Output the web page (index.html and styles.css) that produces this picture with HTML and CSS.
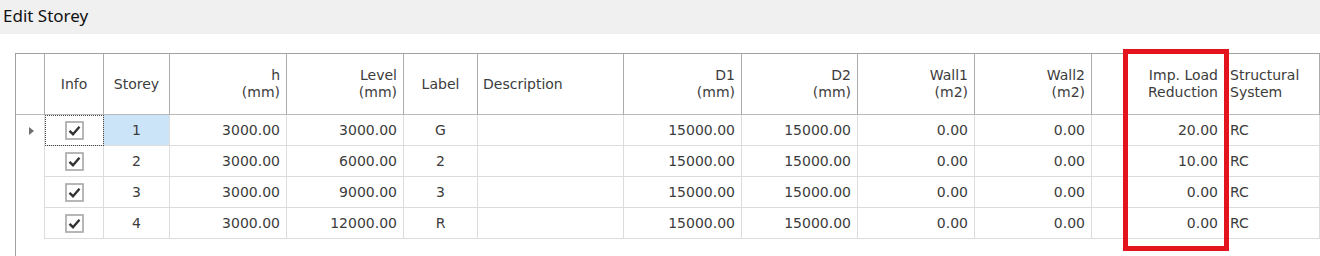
FILE: index.html
```html
<!DOCTYPE html>
<html>
<head>
  <meta charset="UTF-8">
  <title>Edit Storey</title>
  <link rel="stylesheet" href="styles.css">
</head>
<body>

<div class="title">Edit Storey</div>

<div class="panel">
  <div class="grid">
    <!-- header -->
    <div class="hd ind"></div>
    <div class="hd mid">Info</div>
    <div class="hd mid">Storey</div>
    <div class="hd num">h<br>(mm)</div>
    <div class="hd num">Level<br>(mm)</div>
    <div class="hd mid">Label</div>
    <div class="hd txt">Description</div>
    <div class="hd num">D1<br>(mm)</div>
    <div class="hd num">D2<br>(mm)</div>
    <div class="hd num">Wall1<br>(m2)</div>
    <div class="hd num">Wall2<br>(m2)</div>
    <div class="hd num">Imp. Load<br>Reduction</div>
    <div class="hd txt">Structural<br>System</div>

    <!-- row 1 -->
    <div class="cell ind"><span class="arrow"></span></div>
    <div class="cell mid focus"><svg class="chk" width="19" height="19" viewBox="0 0 19 19"><rect x="1" y="1" width="17" height="17" fill="#fff" stroke="#a6a6a6" stroke-width="1.6"/><path d="M4.5 9.8 L8 13.2 L14.5 5.8" fill="none" stroke="#333" stroke-width="2.4"/></svg></div>
    <div class="cell mid sel">1</div>
    <div class="cell num">3000.00</div>
    <div class="cell num">3000.00</div>
    <div class="cell mid">G</div>
    <div class="cell txt"></div>
    <div class="cell num">15000.00</div>
    <div class="cell num">15000.00</div>
    <div class="cell num">0.00</div>
    <div class="cell num">0.00</div>
    <div class="cell num">20.00</div>
    <div class="cell txt">RC</div>

    <!-- row 2 -->
    <div class="cell ind"></div>
    <div class="cell mid"><svg class="chk" width="19" height="19" viewBox="0 0 19 19"><rect x="1" y="1" width="17" height="17" fill="#fff" stroke="#a6a6a6" stroke-width="1.6"/><path d="M4.5 9.8 L8 13.2 L14.5 5.8" fill="none" stroke="#333" stroke-width="2.4"/></svg></div>
    <div class="cell mid">2</div>
    <div class="cell num">3000.00</div>
    <div class="cell num">6000.00</div>
    <div class="cell mid">2</div>
    <div class="cell txt"></div>
    <div class="cell num">15000.00</div>
    <div class="cell num">15000.00</div>
    <div class="cell num">0.00</div>
    <div class="cell num">0.00</div>
    <div class="cell num">10.00</div>
    <div class="cell txt">RC</div>

    <!-- row 3 -->
    <div class="cell ind"></div>
    <div class="cell mid"><svg class="chk" width="19" height="19" viewBox="0 0 19 19"><rect x="1" y="1" width="17" height="17" fill="#fff" stroke="#a6a6a6" stroke-width="1.6"/><path d="M4.5 9.8 L8 13.2 L14.5 5.8" fill="none" stroke="#333" stroke-width="2.4"/></svg></div>
    <div class="cell mid">3</div>
    <div class="cell num">3000.00</div>
    <div class="cell num">9000.00</div>
    <div class="cell mid">3</div>
    <div class="cell txt"></div>
    <div class="cell num">15000.00</div>
    <div class="cell num">15000.00</div>
    <div class="cell num">0.00</div>
    <div class="cell num">0.00</div>
    <div class="cell num">0.00</div>
    <div class="cell txt">RC</div>

    <!-- row 4 -->
    <div class="cell ind"></div>
    <div class="cell mid"><svg class="chk" width="19" height="19" viewBox="0 0 19 19"><rect x="1" y="1" width="17" height="17" fill="#fff" stroke="#a6a6a6" stroke-width="1.6"/><path d="M4.5 9.8 L8 13.2 L14.5 5.8" fill="none" stroke="#333" stroke-width="2.4"/></svg></div>
    <div class="cell mid">4</div>
    <div class="cell num">3000.00</div>
    <div class="cell num">12000.00</div>
    <div class="cell mid">R</div>
    <div class="cell txt"></div>
    <div class="cell num">15000.00</div>
    <div class="cell num">15000.00</div>
    <div class="cell num">0.00</div>
    <div class="cell num">0.00</div>
    <div class="cell num">0.00</div>
    <div class="cell txt">RC</div>
  </div>

  <div class="mark"></div>
</div>

</body>
</html>
```

FILE: styles.css
```css
html, body {
  margin: 0;
  overflow: hidden;
  background: #fff;
}

.title {
  height: 34px;
  line-height: 32px;
  padding-left: 3px;
  background: #f0f0f0;
  font-family: "Noto Sans", sans-serif;
  font-size: 17px;
  color: #111;
}

.panel {
  position: relative;
  padding: 19px 0 0 15px;
}

.grid {
  display: grid;
  grid-template-columns: 29px 59px 66px 117px 117px 74px 146px 118px 116px 117px 117px 133px 95px;
  grid-template-rows: 61px repeat(4, 31px);
  width: 1304px;
  height: 202px;
  border-left: 1px solid #a0a0a0;
  border-top: 1px solid #a0a0a0;
  font-family: "DejaVu Sans", sans-serif;
  font-size: 14px;
  color: #3c3c3c;
}

.hd, .cell {
  box-sizing: border-box;
  display: flex;
  align-items: center;
  overflow: hidden;
  white-space: nowrap;
}

.hd {
  border-right: 1px solid #acacac;
  border-bottom: 1px solid #b9b9b9;
  line-height: 17px;
}

.cell {
  border-right: 1px solid #dcdcdc;
  border-bottom: 1px solid #dcdcdc;
}

.cell.ind {
  border-bottom: none;
  justify-content: center;
  padding-left: 3px;
}

.mid {
  justify-content: center;
  text-align: center;
}

.num {
  justify-content: flex-end;
  text-align: right;
  padding-right: 6px;
}

.txt {
  justify-content: flex-start;
  padding-left: 5px;
}

.sel {
  background: #cce4f7;
}

.focus {
  outline: 1px dotted #444;
  outline-offset: -1px;
}

.arrow {
  width: 0;
  height: 0;
  border-left: 5px solid #6f6f6f;
  border-top: 4.5px solid transparent;
  border-bottom: 4.5px solid transparent;
}

.chk {
  display: block;
}

.mark {
  position: absolute;
  left: 1123px;
  top: 15px;
  width: 96px;
  height: 192px;
  border: 5px solid #e4141f;
}
```
